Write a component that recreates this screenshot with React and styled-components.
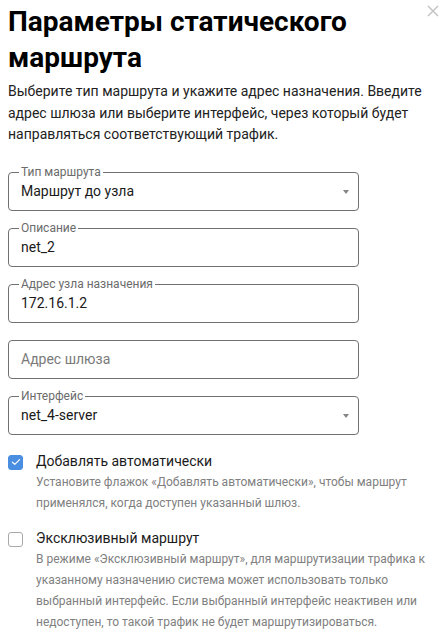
import React from "react";
import styled, { createGlobalStyle } from "styled-components";

const Global = createGlobalStyle`
  html, body { margin: 0; padding: 0; background: #fff; }
  body { font-family: Roboto, "Noto Sans", Arial, sans-serif; color: #1f1f1f; }
  * { box-sizing: border-box; }
`;

const Dialog = styled.div`
  position: relative;
  width: 444px;
  padding: 4px 8px 0 8px;
`;

const Close = styled.button`
  position: absolute;
  top: 4px;
  right: 4px;
  width: 14px;
  height: 14px;
  padding: 0;
  border: 0;
  background: none;
  display: flex;
  align-items: center;
  justify-content: center;
`;

const Title = styled.h1`
  margin: 0;
  padding-right: 12px;
  font-size: 28px;
  line-height: 36px;
  font-weight: 700;
  color: #000;
`;

const Lead = styled.p`
  margin: 5px 0 0;
  padding-right: 8px;
  font-size: 14px;
  line-height: 21.5px;
  color: #222;
`;

const Fields = styled.div`
  display: flex;
  flex-direction: column;
  gap: 17px;
  width: 351px;
  margin-top: 26px;
`;

const Field = styled.div`
  position: relative;
  height: 39px;
  padding: 0 12px;
  border: 1px solid #707070;
  border-radius: 4px;
  display: flex;
  align-items: center;
`;

const Label = styled.span`
  position: absolute;
  top: -8px;
  left: 10px;
  padding: 0 2px;
  background: #fff;
  font-size: 12px;
  line-height: 14px;
  color: #6b6b6b;
`;

const Value = styled.div`
  flex: 1;
  font-size: 14px;
  color: ${(p) => (p.$placeholder ? "#7a7a7a" : "#1a1a1a")};
`;

const Arrow = styled.span`
  width: 0;
  height: 0;
  border-left: 3.5px solid transparent;
  border-right: 3.5px solid transparent;
  border-top: 4px solid #858585;
  margin-right: -3px;
  margin-top: 1px;
`;

const Options = styled.div`
  display: flex;
  flex-direction: column;
  gap: 14px;
  margin-top: 16px;
`;

const Option = styled.div`
  display: grid;
  grid-template-columns: 28px 1fr;
`;

const Box = styled.span`
  width: 15px;
  height: 15px;
  margin-top: 4px;
  border-radius: 3px;
  display: flex;
  align-items: center;
  justify-content: center;
  background: ${(p) => (p.$checked ? "#4a8ee2" : "#fff")};
  border: 1px solid ${(p) => (p.$checked ? "#4a8ee2" : "#a8a8a8")};
`;

const OptLabel = styled.div`
  font-size: 14px;
  line-height: 20px;
  color: #1a1a1a;
`;

const OptHint = styled.div`
  font-size: 12px;
  line-height: 21px;
  color: #808080;
  margin-top: 1px;
`;

function OutlinedField({ label, value, placeholder, select }) {
  return (
    <Field>
      {label && <Label>{label}</Label>}
      <Value $placeholder={!!placeholder}>{value || placeholder}</Value>
      {select && <Arrow />}
    </Field>
  );
}

function CheckOption({ checked, label, hint }) {
  return (
    <Option>
      <Box $checked={checked}>
        {checked && (
          <svg width="10" height="8" viewBox="0 0 10 8">
            <path d="M1.4 4.2 L3.8 6.4 L8.6 1.6" fill="none" stroke="#fff" strokeWidth="1.2" strokeLinecap="round" strokeLinejoin="round" />
          </svg>
        )}
      </Box>
      <div>
        <OptLabel>{label}</OptLabel>
        <OptHint>{hint}</OptHint>
      </div>
    </Option>
  );
}

export default function App() {
  return (
    <>
      <Global />
      <Dialog>
        <Close aria-label="Закрыть">
          <svg width="12" height="12" viewBox="0 0 12 12">
            <path d="M1 1 L11 11 M11 1 L1 11" stroke="#c4c4c4" strokeWidth="1.5" />
          </svg>
        </Close>
        <Title>Параметры статического маршрута</Title>
        <Lead>
          Выберите тип маршрута и укажите адрес назначения. Введите адрес шлюза или выберите интерфейс, через который будет направляться соответствующий трафик.
        </Lead>
        <Fields>
          <OutlinedField label="Тип маршрута" value="Маршрут до узла" select />
          <OutlinedField label="Описание" value="net_2" />
          <OutlinedField label="Адрес узла назначения" value="172.16.1.2" />
          <OutlinedField placeholder="Адрес шлюза" />
          <OutlinedField label="Интерфейс" value="net_4-server" select />
        </Fields>
        <Options>
          <CheckOption
            checked
            label="Добавлять автоматически"
            hint="Установите флажок «Добавлять автоматически», чтобы маршрут применялся, когда доступен указанный шлюз."
          />
          <CheckOption
            label="Эксклюзивный маршрут"
            hint="В режиме «Эксклюзивный маршрут», для маршрутизации трафика к указанному назначению система может использовать только выбранный интерфейс. Если выбранный интерфейс неактивен или недоступен, то такой трафик не будет маршрутизироваться."
          />
        </Options>
      </Dialog>
    </>
  );
}
